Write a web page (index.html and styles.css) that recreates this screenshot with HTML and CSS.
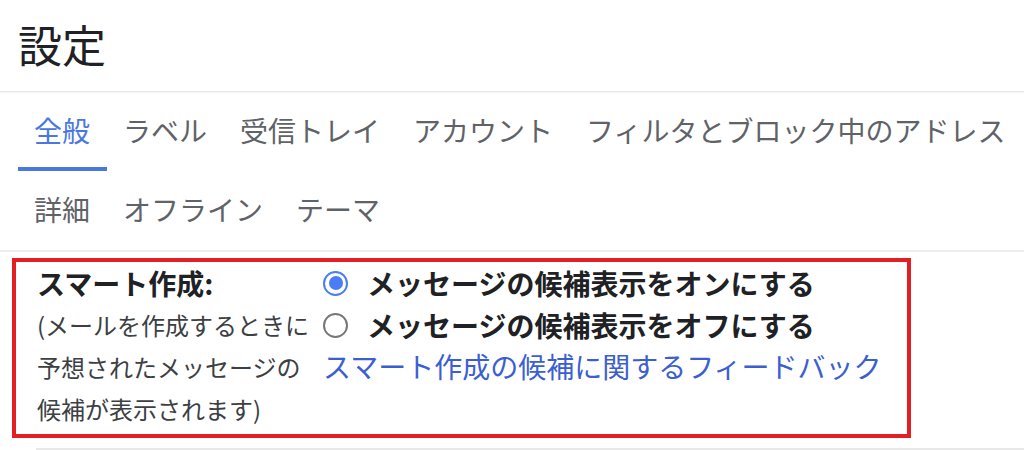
FILE: index.html
```html
<!DOCTYPE html>
<html lang="ja">
<head>
    <meta charset="UTF-8">
    <meta name="viewport" content="width=device-width, initial-scale=1.0">
    <title>設定</title>
    <link rel="stylesheet" href="styles.css">
</head>
<body>

<header class="page-header">
    <h1>設定</h1>
</header>

<nav class="tabs">
    <div class="tab-row">
        <a class="tab active" href="#">全般</a>
        <a class="tab" href="#">ラベル</a>
        <a class="tab" href="#">受信トレイ</a>
        <a class="tab" href="#">アカウント</a>
        <a class="tab" href="#">フィルタとブロック中のアドレス</a>
    </div>
    <div class="tab-row">
        <a class="tab" href="#">詳細</a>
        <a class="tab" href="#">オフライン</a>
        <a class="tab" href="#">テーマ</a>
    </div>
</nav>

<section class="setting highlight">
    <div class="setting-label">
        <div class="setting-title">スマート作成:</div>
        <div class="setting-desc">(メールを作成するときに予想されたメッセージの候補が表示されます)</div>
    </div>
    <div class="setting-options">
        <label class="option">
            <input type="radio" name="smartCompose" value="on" checked>
            <span class="radio"></span>
            メッセージの候補表示をオンにする
        </label>
        <label class="option">
            <input type="radio" name="smartCompose" value="off">
            <span class="radio"></span>
            メッセージの候補表示をオフにする
        </label>
        <a class="feedback-link" href="#">スマート作成の候補に関するフィードバック</a>
    </div>
</section>

<div class="next-setting"></div>

</body>
</html>
```

FILE: styles.css
```css
body {
    margin: 0;
    font-family: "Noto Sans CJK JP", sans-serif;
    background-color: #fff;
    color: #202124;
    overflow-x: hidden;
}

.page-header {
    height: 91px;
    padding-left: 18px;
    border-bottom: 1px solid #e6e6e6;
    box-shadow: 0 1px 2px rgba(0, 0, 0, 0.05);
}

.page-header h1 {
    margin: 0;
    font-size: 44px;
    font-weight: 400;
    line-height: 88px;
    color: #202124;
}

.tabs {
    padding-left: 18px;
    border-bottom: 2px solid #ededed;
}

.tab-row {
    display: flex;
    white-space: nowrap;
}

.tab {
    padding: 18px 17px 17px 16px;
    font-size: 28px;
    line-height: 40px;
    color: #5f6368;
    text-decoration: none;
    border-bottom: 4px solid transparent;
}

.tab.active {
    color: #4a78e0;
    border-bottom-color: #4a78e0;
}

.highlight {
    margin: 6px 0 0 12px;
    width: 899px;
    box-sizing: border-box;
    border: 4px solid #e31e25;
}

.setting {
    display: flex;
    padding: 0 0 4px 21px;
}

.setting-label {
    width: 278px;
    margin-right: 8px;
    flex-shrink: 0;
}

.setting-title {
    font-size: 28px;
    font-weight: bold;
    line-height: 42px;
    color: #202124;
}

.setting-desc {
    font-size: 24px;
    line-height: 42px;
    color: #3c4043;
}

.setting-options {
    display: flex;
    flex-direction: column;
    align-items: flex-start;
}

.option {
    display: flex;
    align-items: center;
    font-size: 28px;
    font-weight: bold;
    line-height: 42px;
    color: #202124;
    cursor: pointer;
}

.option input {
    display: none;
}

.radio {
    width: 25px;
    height: 25px;
    margin-right: 19px;
    box-sizing: border-box;
    border: 2px solid #777;
    border-radius: 50%;
    display: flex;
    align-items: center;
    justify-content: center;
}

.option input:checked + .radio {
    border: 2.5px solid #4a7cf3;
}

.option input:checked + .radio::after {
    content: "";
    width: 14px;
    height: 14px;
    border-radius: 50%;
    background-color: #4a7cf3;
}

.feedback-link {
    font-size: 28px;
    line-height: 40px;
    color: #3b5fd0;
    text-decoration: none;
}

.next-setting {
    margin: 10px 0 0 36px;
    border-top: 2px solid #e8e8e8;
}
```
